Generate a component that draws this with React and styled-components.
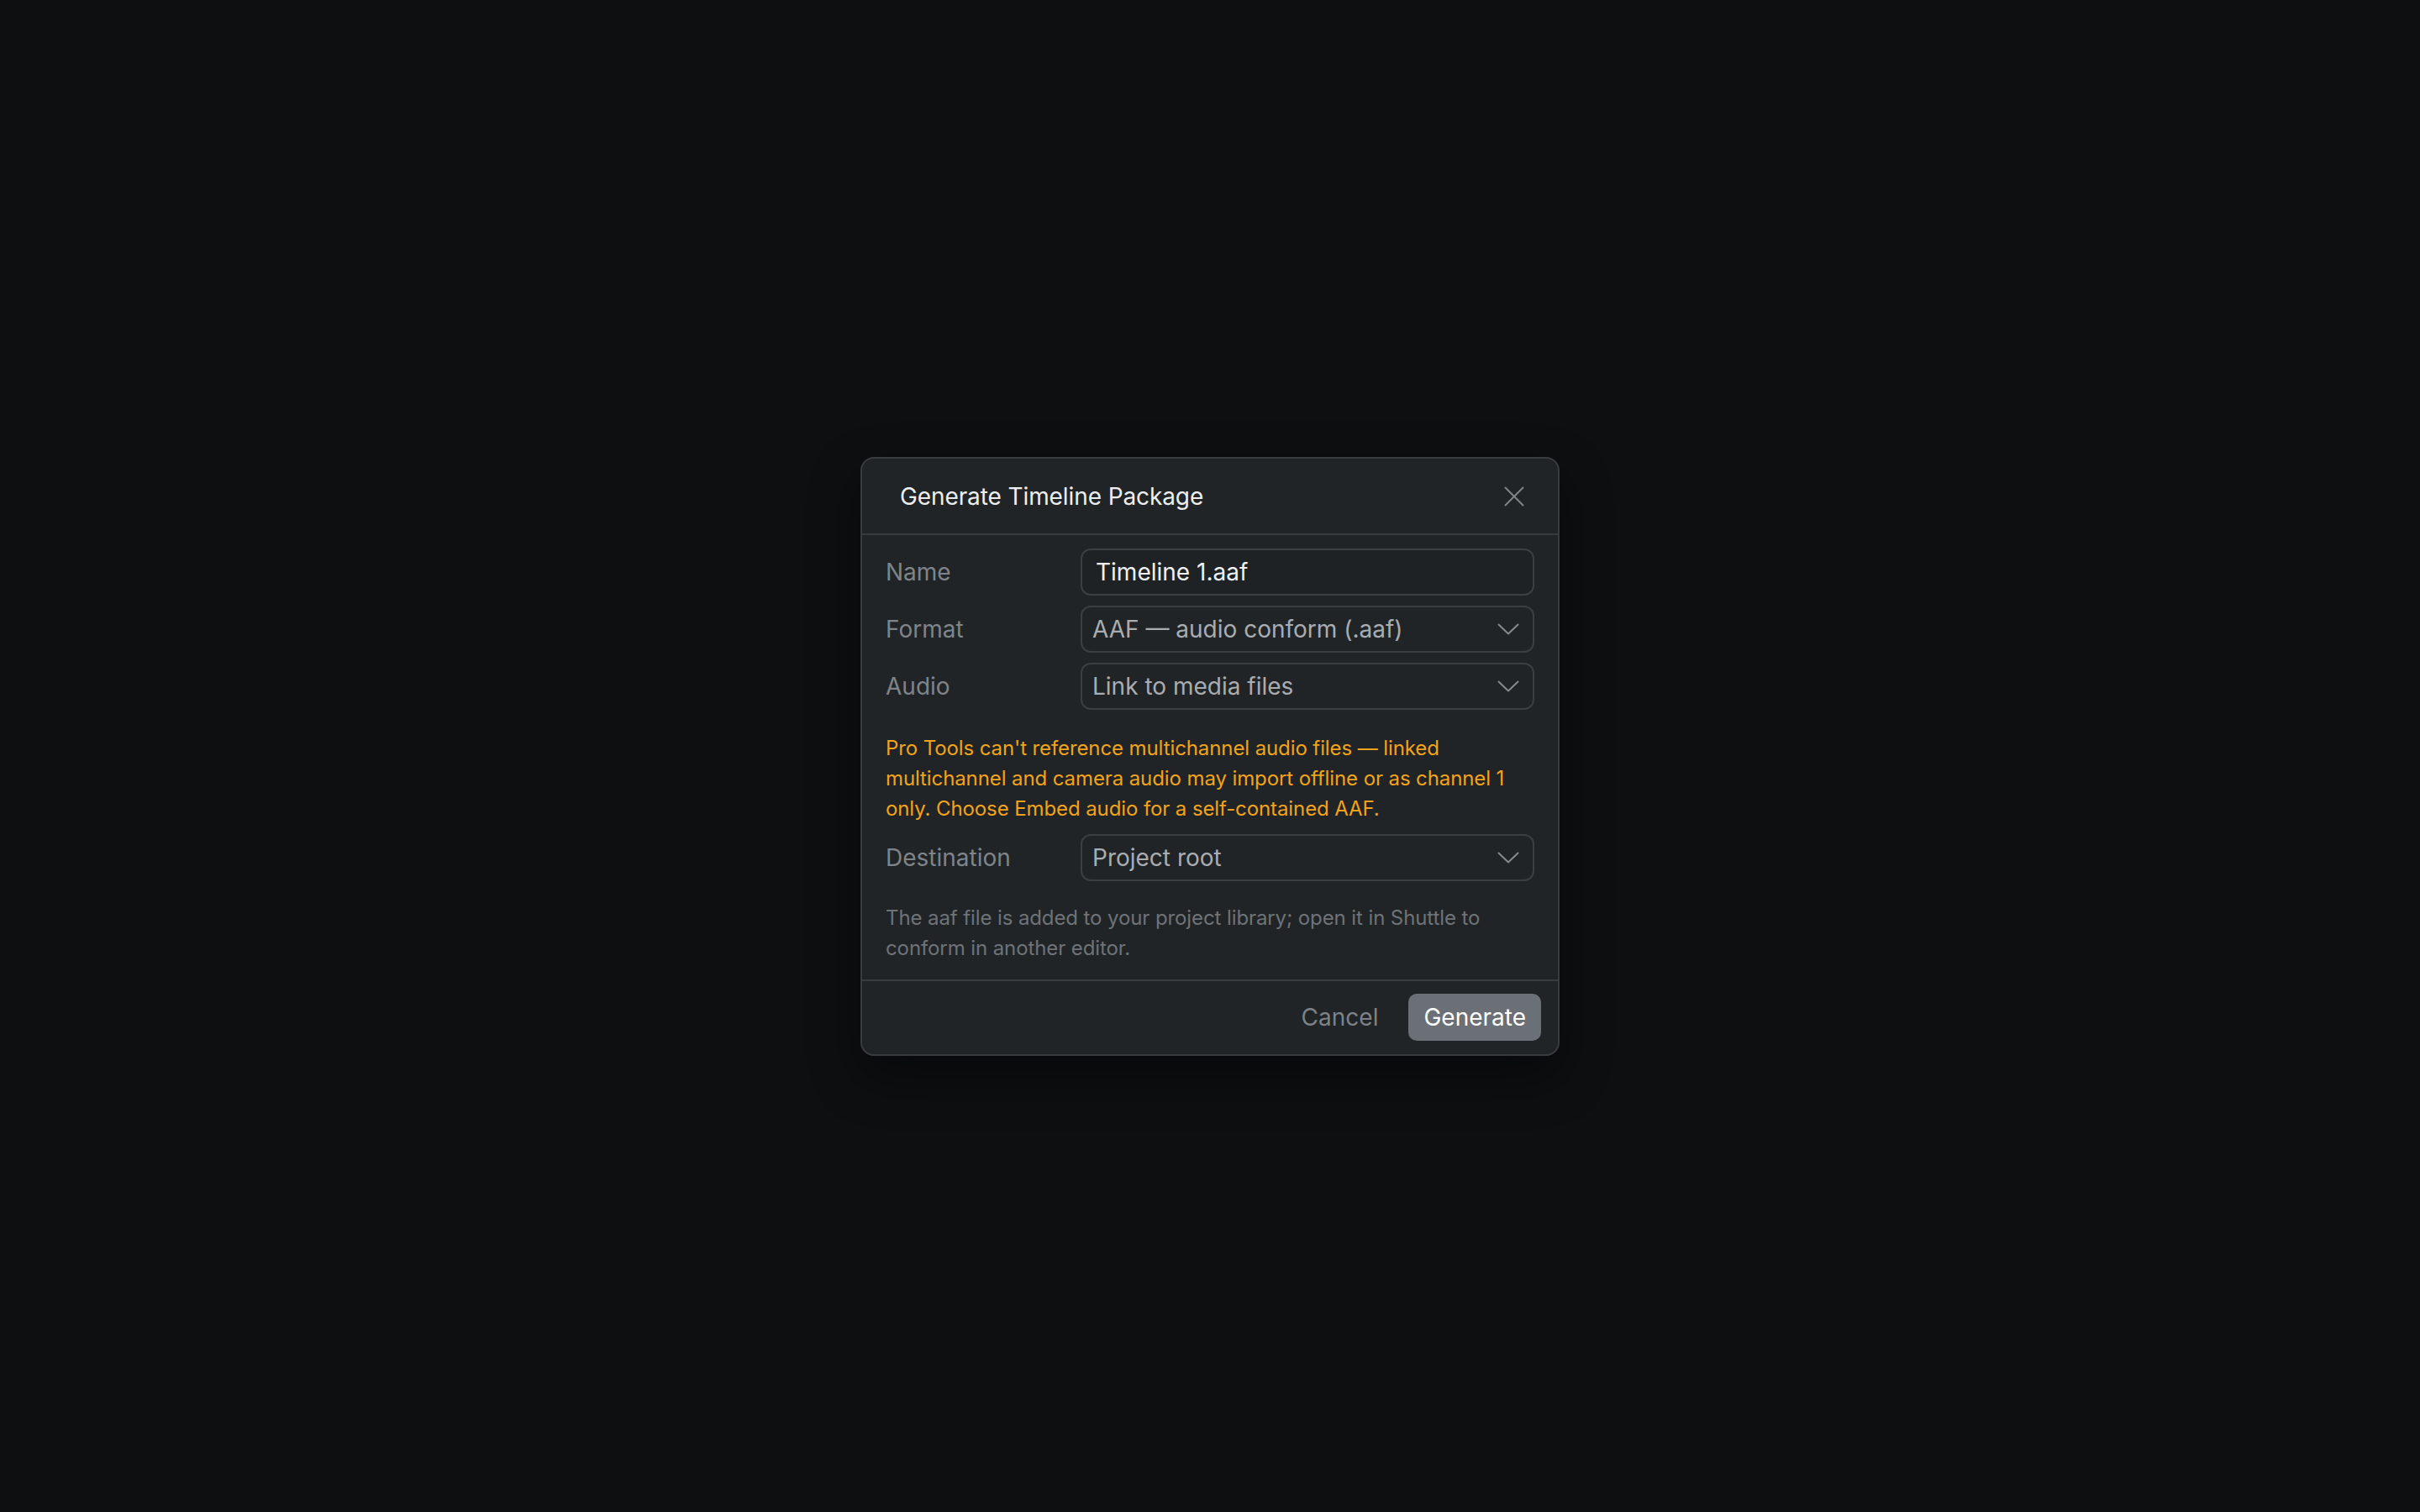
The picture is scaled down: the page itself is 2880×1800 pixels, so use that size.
import React from "react";
import styled, { createGlobalStyle } from "styled-components";

const GlobalStyle = createGlobalStyle`
  html, body {
    margin: 0;
    padding: 0;
    background: #0e0f11;
  }
  body {
    font-family: Inter, "Noto Sans", "Liberation Sans", sans-serif;
    -webkit-font-smoothing: antialiased;
  }
  * {
    box-sizing: border-box;
  }
`;

const Backdrop = styled.div`
  width: 100vw;
  height: 100vh;
  display: flex;
  align-items: center;
  justify-content: center;
  background: #0e0f11;
`;

const Dialog = styled.div`
  width: 832px;
  background: #212426;
  border: 2px solid #383c3f;
  border-radius: 16px;
  box-shadow: 0 24px 60px rgba(0, 0, 0, 0.45);
  display: flex;
  flex-direction: column;
  overflow: hidden;
`;

const Header = styled.div`
  height: 91px;
  display: flex;
  align-items: center;
  justify-content: space-between;
  padding: 2px 36px 0 45px;
  border-bottom: 2px solid #383c3f;
`;

const Title = styled.h2`
  margin: 0;
  font-size: 28px;
  font-weight: 400;
  color: #eceef0;
  letter-spacing: -0.1px;
`;

const CloseButton = styled.button`
  width: 32px;
  height: 32px;
  display: flex;
  align-items: center;
  justify-content: center;
  border: none;
  background: none;
  padding: 0;
  color: #7f858a;
  cursor: pointer;
`;

const Body = styled.div`
  display: flex;
  flex-direction: column;
  gap: 12px;
  padding: 16px 28px 19px 28px;
`;

const Row = styled.div`
  display: grid;
  grid-template-columns: 232px 1fr;
  align-items: center;
`;

const Label = styled.span`
  font-size: 28px;
  color: #7f848a;
`;

const Field = styled.div`
  height: 56px;
  display: flex;
  align-items: center;
  justify-content: space-between;
  padding: 0 16px 0 ${(p) => (p.$input ? "16px" : "12px")};
  border: 2px solid #3b3f43;
  border-radius: 12px;
  background: ${(p) => (p.$input ? "#1f2224" : "transparent")};
  font-size: 28px;
  color: ${(p) => (p.$input ? "#eef0f2" : "#a9adb2")};
`;

const Chevron = styled.svg`
  flex: none;
  color: #858a90;
`;

const Note = styled.p`
  margin: ${(p) => (p.$tone === "warn" ? "16px 0 0" : "14px 0 0")};
  font-size: 24px;
  line-height: 36px;
  letter-spacing: -0.1px;
  color: ${(p) => (p.$tone === "warn" ? "#f2a31c" : "#6e7378")};
`;

const Footer = styled.div`
  display: flex;
  justify-content: flex-end;
  align-items: center;
  gap: 18px;
  padding: 15px 20px 16px 28px;
  border-top: 2px solid #383c3f;
`;

const Button = styled.button`
  height: 56px;
  padding: 0 18px;
  border: none;
  border-radius: 10px;
  font-family: inherit;
  font-size: 28px;
  cursor: pointer;
  background: ${(p) => (p.$primary ? "#6b7076" : "transparent")};
  color: ${(p) => (p.$primary ? "#ffffff" : "#7d8287")};
`;

function ChevronDown() {
  return (
    <Chevron width="26" height="14" viewBox="0 0 26 14" fill="none">
      <path
        d="M1.5 1.5 L13 12.5 L24.5 1.5"
        stroke="currentColor"
        strokeWidth="2"
        strokeLinecap="round"
        strokeLinejoin="round"
      />
    </Chevron>
  );
}

function SelectRow({ label, value }) {
  return (
    <Row>
      <Label>{label}</Label>
      <Field>
        <span>{value}</span>
        <ChevronDown />
      </Field>
    </Row>
  );
}

export default function App() {
  return (
    <>
      <GlobalStyle />
      <Backdrop>
        <Dialog>
          <Header>
            <Title>Generate Timeline Package</Title>
            <CloseButton aria-label="Close">
              <svg width="24" height="24" viewBox="0 0 24 24" fill="none">
                <path
                  d="M1.5 1.5 L22.5 22.5 M22.5 1.5 L1.5 22.5"
                  stroke="currentColor"
                  strokeWidth="2"
                  strokeLinecap="round"
                />
              </svg>
            </CloseButton>
          </Header>
          <Body>
            <Row>
              <Label>Name</Label>
              <Field $input>Timeline 1.aaf</Field>
            </Row>
            <SelectRow label="Format" value="AAF — audio conform (.aaf)" />
            <SelectRow label="Audio" value="Link to media files" />
            <Note $tone="warn">
              Pro Tools can't reference multichannel audio files — linked
              multichannel and camera audio may import offline or as channel 1
              only. Choose Embed audio for a self-contained AAF.
            </Note>
            <SelectRow label="Destination" value="Project root" />
            <Note>
              The aaf file is added to your project library; open it in Shuttle
              to conform in another editor.
            </Note>
          </Body>
          <Footer>
            <Button>Cancel</Button>
            <Button $primary>Generate</Button>
          </Footer>
        </Dialog>
      </Backdrop>
    </>
  );
}
